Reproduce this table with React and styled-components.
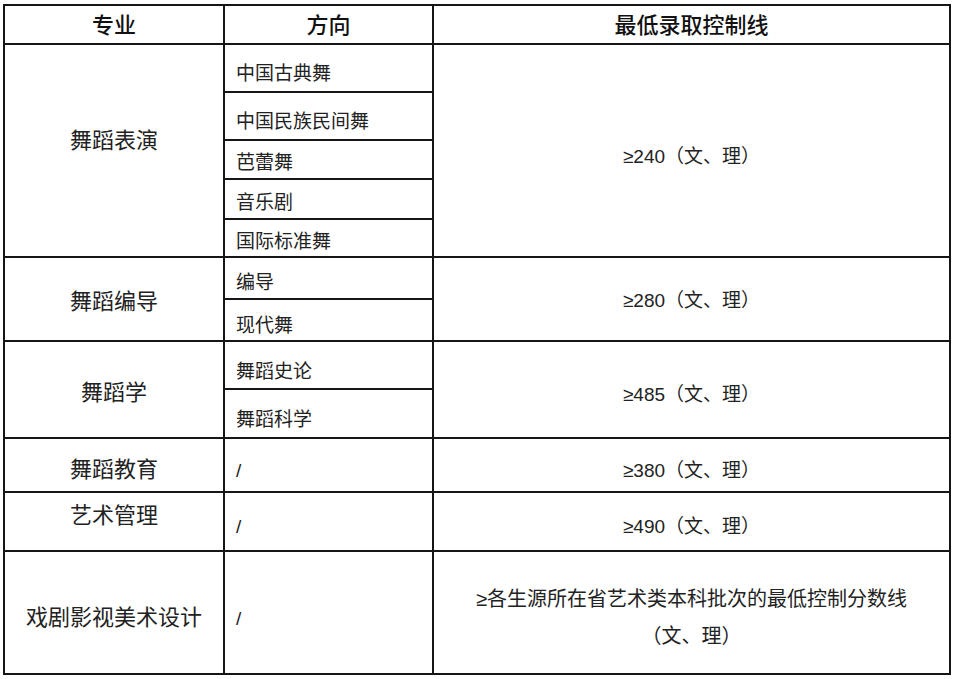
import React from 'react';
import styled, { createGlobalStyle } from 'styled-components';

const GlobalStyle = createGlobalStyle`
  html, body {
    margin: 0;
    padding: 0;
    background: #ffffff;
  }
  body {
    font-family: "Liberation Sans", "Noto Sans CJK SC", sans-serif;
    color: #222;
  }
`;

const Page = styled.div`
  width: 955px;
  height: 679px;
  background: #fff;
  padding: 4px 0 0 3px;
  box-sizing: border-box;
`;

const Grid = styled.div`
  display: grid;
  grid-template-columns: 218px 207px 515px;
  grid-template-rows: 37px 46px 46px 37px 38px 36px 40px 40px 46px 47px 52px 57px 121px;
  gap: 2px;
  padding: 2px;
  width: 948px;
  box-sizing: border-box;
  background: #161616;
`;

const Cell = styled.div`
  background: #fff;
  display: flex;
  flex-direction: column;
  align-items: ${p => (p.$left ? 'flex-start' : 'center')};
  justify-content: center;
  grid-column: ${p => p.$col};
  grid-row: ${p => p.$row} / span ${p => p.$span || 1};
  box-sizing: border-box;
  padding-left: ${p => (p.$left ? '11px' : '0')};
  padding-top: ${p => (p.$dy > 0 ? p.$dy * 2 : 0)}px;
  padding-bottom: ${p => (p.$dy < 0 ? -p.$dy * 2 : 0)}px;
  font-size: ${p => p.$size || 19}px;
  line-height: 1;
  white-space: nowrap;
`;

const HeadCell = styled(Cell)`
  font-size: 22px;
  font-weight: 500;
  color: #111;
`;

const MajorCell = styled(Cell)`
  font-size: 22px;
  color: #222;
`;

const ScoreLine = styled.span`
  display: block;
  text-align: center;
  line-height: 37px;
  font-size: 20px;
`;

const rows = [
  { major: '舞蹈表演', dy: -10, dirs: [['中国古典舞', 5], ['中国民族民间舞', 5], ['芭蕾舞', 2.5], ['音乐剧', 3], ['国际标准舞', 3]], score: '240', sdy: 6 },
  { major: '舞蹈编导', dy: 3, dirs: [['编导', 4.5], ['现代舞', 5]], score: '280', sdy: 1 },
  { major: '舞蹈学', dy: 3.5, dirs: [['舞蹈史论', 6], ['舞蹈科学', 5.5]], score: '485', sdy: 4.5 },
  { major: '舞蹈教育', dy: 4.5, dirs: [['/', 5]], score: '380', sdy: 5 },
  { major: '艺术管理', dy: -5.5, dirs: [['/', 5]], score: '490', sdy: 4.5 },
];

let start = 2;
const placed = rows.map(r => {
  const row = { ...r, row: start };
  start += r.dirs.length;
  return row;
});

export default function App() {
  return (
    <Page>
      <GlobalStyle />
      <Grid>
        <HeadCell $col={1} $row={1} $dy={1.5}>专业</HeadCell>
        <HeadCell $col={2} $row={1} $dy={1.5}>方向</HeadCell>
        <HeadCell $col={3} $row={1} $dy={1.5}>最低录取控制线</HeadCell>

        {placed.map(r => (
          <React.Fragment key={r.major}>
            <MajorCell $col={1} $row={r.row} $span={r.dirs.length} $dy={r.dy}>{r.major}</MajorCell>
            {r.dirs.map(([d, dy], i) => (
              <Cell key={i} $col={2} $row={r.row + i} $left $dy={dy}>{d}</Cell>
            ))}
            <Cell $col={3} $row={r.row} $span={r.dirs.length} $dy={r.sdy}>≥{r.score}（文、理）</Cell>
          </React.Fragment>
        ))}

        <MajorCell $col={1} $row={start} $dy={5.5}>戏剧影视美术设计</MajorCell>
        <Cell $col={2} $row={start} $left $dy={5.5}>/</Cell>
        <Cell $col={3} $row={start} $dy={5}>
          <ScoreLine>≥各生源所在省艺术类本科批次的最低控制分数线</ScoreLine>
          <ScoreLine>（文、理）</ScoreLine>
        </Cell>
      </Grid>
    </Page>
  );
}
